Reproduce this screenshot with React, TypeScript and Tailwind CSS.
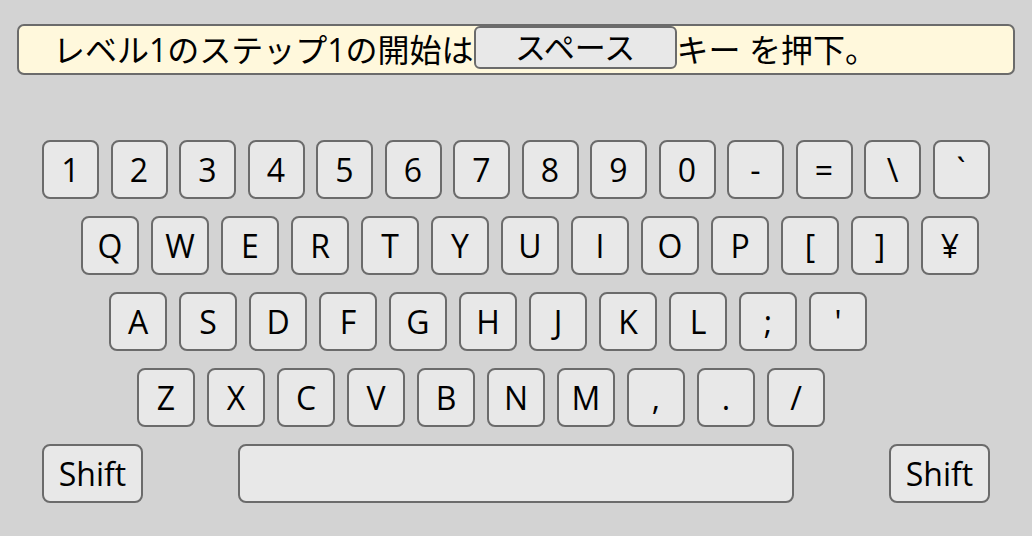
import React from "react";

const font = { fontFamily: '"Open Sans", "Noto Sans CJK JP", sans-serif' };

function Key({ label, w }: { label: string; w: string }) {
  return (
    <div
      className={`${w} h-[59px] shrink-0 border-2 border-[#6b6b6b] rounded-[8px] bg-[#e8e8e8] flex items-center justify-center text-[32px] leading-none text-black`}
    >
      {label}
    </div>
  );
}

const row1 = ["1", "2", "3", "4", "5", "6", "7", "8", "9", "0", "-", "=", "\\", "`"];
const row2 = ["Q", "W", "E", "R", "T", "Y", "U", "I", "O", "P", "[", "]", "¥"];
const row3 = ["A", "S", "D", "F", "G", "H", "J", "K", "L", ";", "'"];
const row4 = ["Z", "X", "C", "V", "B", "N", "M", ",", ".", "/"];

export default function App() {
  return (
    <div className="w-[1032px] h-[536px] bg-[#d3d3d3] pt-[24px] overflow-hidden" style={font}>
      <div className="mx-[17px] h-[51px] border-2 border-[#6b6b6b] rounded-[7px] bg-[#fff8dc] flex items-center pl-[34px] text-[32px] leading-none text-black whitespace-pre">
        <span>レベル1のステップ1の開始は</span>
        <span className="w-[203px] h-[43px] mb-[4px] shrink-0 border-2 border-[#6b6b6b] rounded-[6px] bg-[#e8e8e8] flex items-center justify-center text-[31px]">
          スペース
        </span>
        <span>キー を押下。</span>
      </div>

      <div className="mt-[65px] flex flex-col gap-[17px]">
        <div className="flex pl-[42px] gap-[11.5px]">
          {row1.map((k) => (
            <Key key={k} label={k} w="w-[57px]" />
          ))}
        </div>
        <div className="flex pl-[81px] gap-[12px]">
          {row2.map((k) => (
            <Key key={k} label={k} w="w-[58px]" />
          ))}
        </div>
        <div className="flex pl-[109px] gap-[12px]">
          {row3.map((k) => (
            <Key key={k} label={k} w="w-[58px]" />
          ))}
        </div>
        <div className="flex pl-[137px] gap-[12px]">
          {row4.map((k) => (
            <Key key={k} label={k} w="w-[58px]" />
          ))}
        </div>
        <div className="flex pl-[42px]">
          <Key label="Shift" w="w-[101px]" />
          <div className="ml-[95px]">
            <Key label="" w="w-[556px]" />
          </div>
          <div className="ml-[95px]">
            <Key label="Shift" w="w-[101px]" />
          </div>
        </div>
      </div>
    </div>
  );
}
